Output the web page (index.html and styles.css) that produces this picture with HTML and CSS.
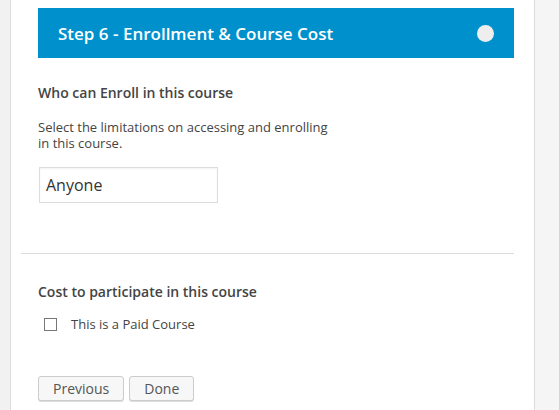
FILE: index.html
```html
<!DOCTYPE html>
<html>
<head>
<meta charset="utf-8">
<link rel="stylesheet" href="styles.css">
</head>
<body>
<div class="page">
  <div class="gutter"></div>
  <div class="panel">
    <div class="step-header">
      <span class="step-title">Step 6 - Enrollment &amp; Course Cost</span>
      <span class="step-dot"></span>
    </div>
    <div class="section">
      <h3 class="section-title">Who can Enroll in this course</h3>
      <p class="section-desc">Select the limitations on accessing and enrolling in this course.</p>
      <div class="select-box">Anyone</div>
    </div>
    <hr class="divider">
    <div class="section section-cost">
      <h3 class="section-title">Cost to participate in this course</h3>
      <label class="check-row"><span class="checkbox"></span><span class="check-label">This is a Paid Course</span></label>
    </div>
    <div class="buttons">
      <button class="btn">Previous</button>
      <button class="btn">Done</button>
    </div>
  </div>
  <div class="side"></div>
</div>
</body>
</html>
```

FILE: styles.css
```css
html, body {
  margin: 0;
  padding: 0;
  height: 100%;
  background: #f1f1f1;
  font-family: "Open Sans", "Liberation Sans", sans-serif;
  color: #444;
}
.page {
  display: flex;
  height: 410px;
  overflow: hidden;
}
.gutter {
  width: 10px;
  flex: none;
  background: #f1f1f1;
}
.panel {
  flex: none;
  background: #fff;
  border-left: 1px solid #dcdcdc;
  border-right: 1px solid #dcdcdc;
  padding: 8px 20px 0 27px;
  box-sizing: content-box;
  width: 476px;
}
.side {
  flex: 1;
  background: #f5f5f5;
}
.step-header {
  height: 50px;
  background: #0091cd;
  display: flex;
  align-items: center;
  justify-content: space-between;
  padding: 0 20px;
}
.step-title {
  color: #fff;
  font-size: 17px;
  font-weight: 600;
}
.step-dot {
  width: 17px;
  height: 17px;
  border-radius: 50%;
  background: #eee;
}
.section {
  padding-top: 26px;
}
.section-title {
  margin: 0;
  font-size: 14px;
  font-weight: 600;
  color: #444;
  line-height: 18px;
}
.section-desc {
  margin: 17px 0 0;
  font-size: 13px;
  line-height: 16px;
  width: 300px;
  color: #444;
}
.select-box {
  margin: 16px 0 0 1px;
  height: 34px;
  border: 1px solid #ddd;
  box-sizing: content-box;
  font-size: 16px;
  line-height: 34px;
  padding-left: 6px;
  color: #333;
  width: 171px;
  box-shadow: inset 0 1px 2px rgba(0,0,0,0.05);
}
.divider {
  margin: 50px 0 0 -17px;
  border: 0;
  border-top: 1px solid #ddd;
  height: 0;
}
.section-cost {
  padding-top: 29px;
}
.check-row {
  display: flex;
  align-items: center;
  height: 18px;
  margin-top: 14px;
  margin-left: 6px;
}
.checkbox {
  width: 11px;
  height: 11px;
  border: 1px solid #777;
  background: #fff;
  flex: none;
  margin-top: 1px;
}
.check-label {
  margin-left: 14px;
  font-size: 13px;
  color: #444;
}
.buttons {
  display: flex;
  gap: 5px;
  margin-top: 43px;
}
.btn {
  font-family: "Open Sans", "Liberation Sans", sans-serif;
  font-size: 14px;
  color: #555;
  height: 25px;
  padding: 0 14px;
  border: 1px solid #ccc;
  border-radius: 3px;
  background: #f7f7f7;
  box-shadow: 0 1px 0 #ddd;
  line-height: 22px;
}
```
